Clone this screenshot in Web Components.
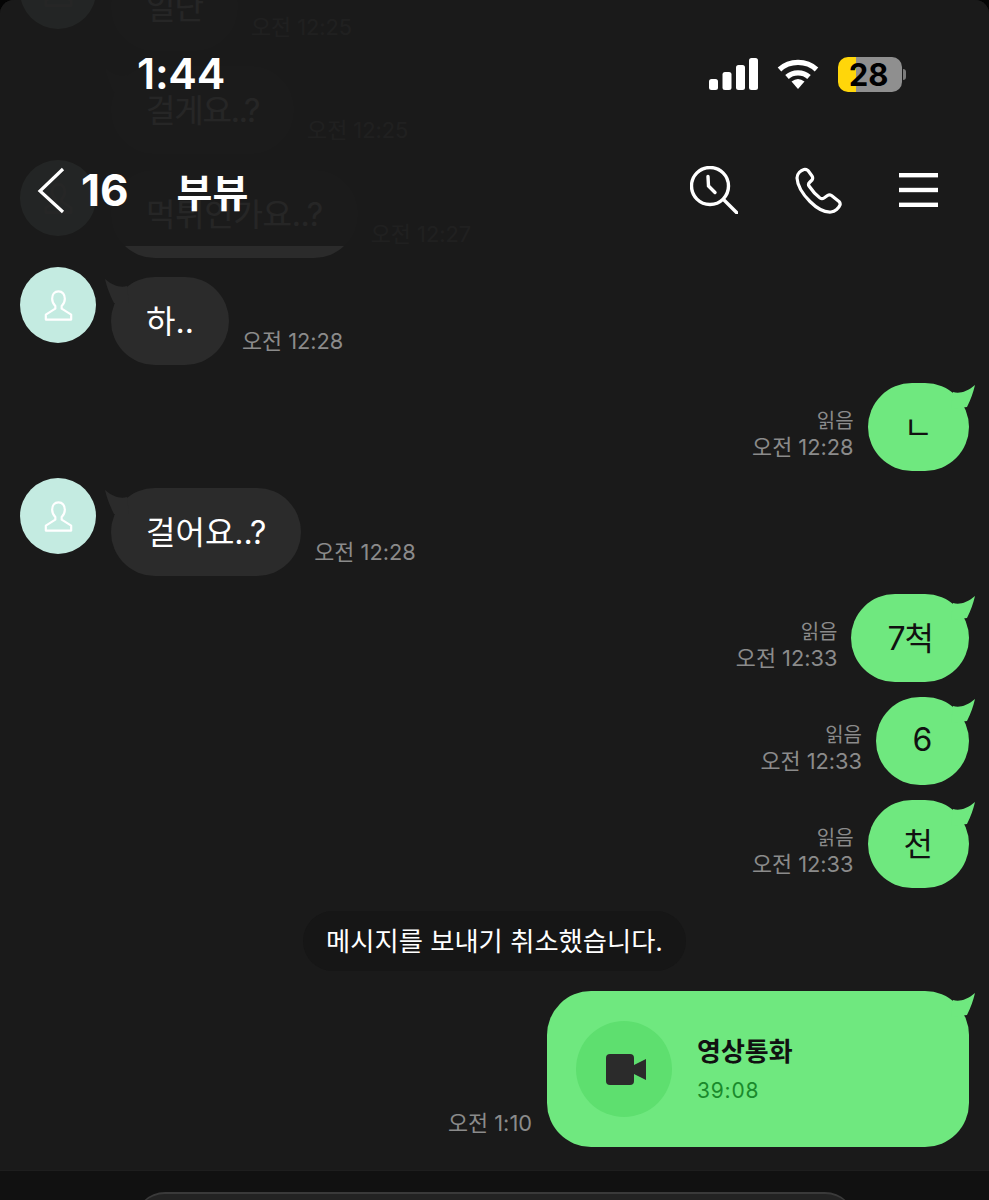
<!DOCTYPE html>
<html lang="ko">
<head>
<meta charset="utf-8">
<title>부뷰</title>
<style>
  html, body { margin: 0; padding: 0; background: #050505; }
  body { font-family: Inter, "Noto Sans CJK KR", sans-serif; }
</style>
</head>
<body>
<chat-screen>
  <status-bar slot="top"></status-bar>
  <chat-header slot="top" count="16" title="부뷰"></chat-header>

  <chat-bubble from="them" time="오전 12:25" style="margin-top:-37px;letter-spacing:-1px">일단</chat-bubble>
  <chat-bubble from="them" noavatar time="오전 12:25" style="margin-top:15px;letter-spacing:-1.200px">걸게요..?</chat-bubble>
  <chat-bubble from="them" time="오전 12:27" style="margin-top:16px;letter-spacing:-.3px">먹튀인가요..?</chat-bubble>
  <chat-bubble from="them" time="오전 12:28" style="margin-top:19px">하..</chat-bubble>
  <chat-bubble from="me" time="오전 12:28" style="margin-top:18px">ㄴ</chat-bubble>
  <chat-bubble from="them" time="오전 12:28" style="margin-top:17px">걸어요..?</chat-bubble>
  <chat-bubble from="me" time="오전 12:33" style="margin-top:18px;letter-spacing:-1px">7척</chat-bubble>
  <chat-bubble from="me" time="오전 12:33" style="margin-top:15px">6</chat-bubble>
  <chat-bubble from="me" time="오전 12:33" style="margin-top:15px">천</chat-bubble>
  <system-note style="margin-top:23px">메시지를 보내기 취소했습니다.</system-note>
  <call-bubble time="오전 1:10" label="영상통화" duration="39:08" style="margin-top:20px"></call-bubble>

  <input-bar slot="bottom"></input-bar>
</chat-screen>

<script>
const FONT = 'Inter, "Noto Sans CJK KR", sans-serif';
const TAIL_ME = `<svg class="tail" width="30" height="28" viewBox="0 0 30 28"><path d="M8 7C14 9 22 7 30 0 28 8 26 14 22 22L6 24Z" fill="#6fe87f"/></svg>`;
const TAIL_THEM = `<svg class="tail" width="30" height="28" viewBox="0 0 30 28"><path d="M22 7C16 9 8 7 0 0 2 8 4 14 9 24L24 24Z" fill="#2b2b2b"/></svg>`;

class ChatScreen extends HTMLElement {
  constructor() {
    super();
    this.attachShadow({ mode: "open" });
    this.shadowRoot.innerHTML = `
      <style>
        :host { display: block; width: 989px; height: 1200px; position: relative; overflow: hidden; background: #1a1a1a; font-family: ${FONT}; border-radius: 14px 14px 0 0; }
        .list { height: 1170px; box-sizing: border-box; padding: 0 20px; overflow: hidden; display: flex; flex-direction: column; }
        .top { position: absolute; left: 0; top: 0; width: 100%; height: 246px; background: rgba(26,26,26,.95); }
      </style>
      <div class="list"><slot></slot></div>
      <slot name="bottom"></slot>
      <div class="top"><slot name="top"></slot></div>
    `;
  }
}

class StatusBar extends HTMLElement {
  constructor() {
    super();
    this.attachShadow({ mode: "open" });
    this.shadowRoot.innerHTML = `
      <style>
        :host { display: flex; align-items: center; justify-content: space-between; height: 60px; padding: 44px 87px 0 137px; color: #fff; }
        .clock { font-size: 43px; font-weight: 600; line-height: 56px; letter-spacing: -.3px; margin-bottom: 2px; }
        .icons { display: flex; align-items: center; gap: 19px; }
        svg { display: block; }
        .batt { position: relative; width: 64px; height: 35px; box-sizing: border-box; padding-right: 3px; border-radius: 10px; background: linear-gradient(90deg, #ffd60a 0 18px, #8f8f8f 18px); display: flex; align-items: center; justify-content: center; color: #000; font-size: 31px; font-weight: 700; line-height: 35px; }
        .batt::after { content: ""; position: absolute; left: 65px; top: 12px; width: 3px; height: 11px; border-radius: 0 3px 3px 0; background: #7b7b7b; }
      </style>
      <div class="clock">1:44</div>
      <div class="icons">
        <svg width="49" height="32" viewBox="0 0 49 32" fill="#fff">
          <rect x="0" y="21" width="9" height="11" rx="2.5"/>
          <rect x="13.5" y="14" width="9" height="18" rx="2.5"/>
          <rect x="27" y="7" width="9" height="25" rx="2.5"/>
          <rect x="40" y="0" width="9" height="32" rx="2.5"/>
        </svg>
        <svg width="42" height="32" viewBox="0 0 42 32" fill="none" stroke="#fff" stroke-width="5.2">
          <path d="M2.5 11.500C12.500 2 29.500 2 39.500 11.500"/>
          <path d="M10 19C16 13.500 26 13.500 32 19"/>
          <path d="M14.500 23.500Q21 18.500 27.500 23.500L21 31Z" fill="#fff" stroke="none"/>
        </svg>
        <div class="batt">28</div>
      </div>
    `;
  }
}

class ChatHeader extends HTMLElement {
  constructor() {
    super();
    this.attachShadow({ mode: "open" });
    const count = this.getAttribute("count");
    const title = this.getAttribute("title");
    this.shadowRoot.innerHTML = `
      <style>
        :host { display: flex; align-items: center; height: 60px; margin-top: 56px; padding: 0 51px 0 37px; color: #fff; }
        svg { display: block; flex: none; }
        .count { font-size: 44px; font-weight: 700; margin-left: 15px; }
        .title { font-size: 39px; font-weight: 700; margin-left: 48px; flex: 1; }
        .actions { display: flex; align-items: center; gap: 57px; }
      </style>
      <svg width="29" height="48" viewBox="0 0 29 48" fill="none" stroke="#fff" stroke-width="3.200"><path d="M26 3 3 25l23 21"/></svg>
      <span class="count">${count}</span>
      <span class="title">${title}</span>
      <div class="actions">
        <svg width="48" height="48" viewBox="0 0 48 48" fill="none" stroke="#fff" stroke-width="3.400" stroke-linecap="round">
          <circle cx="20" cy="20" r="18.500"/>
          <path d="M33.500 33.500 47 47"/>
          <path d="M18 10.500 18.500 20 25 26.500"/>
        </svg>
        <svg width="47" height="47" viewBox="0 0 47 47" fill="none" stroke="#fff" stroke-width="3.200" stroke-linejoin="round">
          <path d="M9 2.500C6 3.500 2 6.500 2 11c.5 8 6 16.500 13 23.500C21.500 41 29 45.500 36 45c4-.5 8-4 9-7 .5-1.500 0-2.500-1-3.500l-7.500-6c-1.500-1-2.500-1-4 0L29 31c-1.500 1-2.500 1-4 0-4-3-8-7.500-11-12-1-1.500-.5-2.500.5-3.500l2.500-2.500c1-1.500 1-2.500 0-4l-4-5.500C11.500 2.500 10.500 2 9 2.500Z"/>
        </svg>
        <svg width="39" height="34" viewBox="0 0 39 34" fill="#fff">
          <rect y="0" width="39" height="4.400"/>
          <rect y="14.800" width="39" height="4.400"/>
          <rect y="29.600" width="39" height="4.400"/>
        </svg>
      </div>
    `;
  }
}

class ChatBubble extends HTMLElement {
  constructor() {
    super();
    this.attachShadow({ mode: "open" });
    const mine = this.getAttribute("from") === "me";
    const time = this.getAttribute("time");
    const showAvatar = !mine && !this.hasAttribute("noavatar");
    this.shadowRoot.innerHTML = `
      <style>
        :host { display: flex; align-items: flex-start; justify-content: ${mine ? "flex-end" : "flex-start"}; }
        .avatar { width: 76px; height: 76px; border-radius: 50%; background: #c4ebe1; flex: none; margin: -10px 15px 0 0; display: flex; align-items: center; justify-content: center; }
        .spacer { width: 91px; flex: none; }
        .bubble { position: relative; height: 88px; min-width: 93px; justify-content: center; box-sizing: border-box; padding: 0 ${mine ? "36px" : "35px"} 4px; border-radius: 44px; display: flex; align-items: center; font-size: 32px; color: ${mine ? "#111" : "#fff"}; background: ${mine ? "#6fe87f" : "#2b2b2b"}; white-space: nowrap; }
        .tail { position: absolute; top: 2px; ${mine ? "right: -6px" : "left: -6px"}; }
        .meta { align-self: flex-end; color: #8b8b8b; font-size: 21.800px; line-height: 26px; letter-spacing: 0; margin: ${mine ? "0 14px 11px 0" : "0 0 11px 13px"}; text-align: right; white-space: nowrap; }
        .read { font-size: 20px; }
      </style>
      ${showAvatar ? `<div class="avatar"><svg width="29" height="31" viewBox="0 0 32 34" fill="none" stroke="#fff" stroke-width="2.400" stroke-linejoin="round"><path d="M16 1.500c-4.500 0-7 3.500-7 8 0 3.500 1.500 6 3.500 8v3L2 27v5.500h28V27l-10.500-6.500v-3c2-2 3.500-4.500 3.500-8 0-4.500-2.500-8-7-8Z"/></svg></div>` : (mine ? "" : `<div class="spacer"></div>`)}
      ${mine ? `<div class="meta"><div class="read">읽음</div><div>${time}</div></div>` : ""}
      <div class="bubble">${mine ? TAIL_ME : TAIL_THEM}<slot></slot></div>
      ${mine ? "" : `<div class="meta">${time}</div>`}
    `;
  }
}

class SystemNote extends HTMLElement {
  constructor() {
    super();
    this.attachShadow({ mode: "open" });
    this.shadowRoot.innerHTML = `
      <style>
        :host { display: flex; justify-content: center; }
        .pill { height: 60px; box-sizing: border-box; padding: 0 23px 3px; border-radius: 30px; background: #161616; color: #fff; font-size: 26.300px; display: flex; align-items: center; white-space: nowrap; }
      </style>
      <div class="pill"><slot></slot></div>
    `;
  }
}

class CallBubble extends HTMLElement {
  constructor() {
    super();
    this.attachShadow({ mode: "open" });
    const time = this.getAttribute("time");
    const label = this.getAttribute("label");
    const duration = this.getAttribute("duration");
    this.shadowRoot.innerHTML = `
      <style>
        :host { display: flex; justify-content: flex-end; align-items: flex-end; }
        .meta { color: #8b8b8b; font-size: 21.800px; line-height: 26px; margin: 0 15px 11px 0; white-space: nowrap; }
        .bubble { position: relative; width: 422px; height: 156px; box-sizing: border-box; padding: 30px 29px; border-radius: 44px; background: #6fe87f; display: flex; align-items: center; gap: 25px; }
        .tail { position: absolute; top: 2px; right: -6px; }
        .icon { width: 96px; height: 96px; border-radius: 50%; background: #5edf6f; display: flex; align-items: center; justify-content: center; flex: none; }
        .icon svg { margin-left: 4px; }
        .label { font-size: 26px; font-weight: 700; color: #111; line-height: 36px; }
        .duration { font-size: 21px; color: #1a8a2c; line-height: 26px; margin-top: 8px; letter-spacing: .8px; }
      </style>
      <div class="meta">${time}</div>
      <div class="bubble">
        ${TAIL_ME}
        <div class="icon">
          <svg width="40" height="31" viewBox="0 0 40 31" fill="#2b2b2b"><rect width="28" height="31" rx="4"/><path d="M28 11 40 5v21l-12-6Z"/></svg>
        </div>
        <div>
          <div class="label">${label}</div>
          <div class="duration">${duration}</div>
        </div>
      </div>
    `;
  }
}

class InputBar extends HTMLElement {
  constructor() {
    super();
    this.attachShadow({ mode: "open" });
    this.shadowRoot.innerHTML = `
      <style>
        :host { display: flex; justify-content: center; height: 30px; box-sizing: border-box; padding: 21px 134px 0 135px; background: #111; border-top: 1px solid #1e1e1e; overflow: hidden; }
        .field { width: 720px; height: 60px; border-radius: 30px; background: #232323; border-top: 2px solid #3a3a3a; }
      </style>
      <div class="field"></div>
    `;
  }
}

customElements.define("chat-screen", ChatScreen);
customElements.define("status-bar", StatusBar);
customElements.define("chat-header", ChatHeader);
customElements.define("chat-bubble", ChatBubble);
customElements.define("system-note", SystemNote);
customElements.define("call-bubble", CallBubble);
customElements.define("input-bar", InputBar);
</script>
</body>
</html>
